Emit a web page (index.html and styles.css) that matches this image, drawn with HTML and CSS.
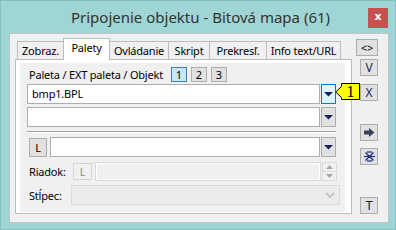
FILE: index.html
```html
<!DOCTYPE html>
<html>
<head>
<meta charset="utf-8">
<link rel="stylesheet" href="styles.css">
</head>
<body>
<div class="window">
  <div class="titlebar">
    <div class="title-spacer"></div>
    <div class="title">Pripojenie objektu - Bitová mapa (61)</div>
    <div class="close">x</div>
  </div>
  <div class="client">
    <div class="tabctl">
      <div class="tabs">
        <div class="tab w-zob">Zobraz.</div>
        <div class="tab active w-pal">Palety</div>
        <div class="tab w-ovl">Ovládanie</div>
        <div class="tab w-skr">Skript</div>
        <div class="tab w-pre">Prekresľ.</div>
        <div class="tab w-inf">Info text/URL</div>
      </div>
      <div class="sheet">
        <div class="panel">
          <div class="row-head">
            <span class="head-label">Paleta / EXT paleta / Objekt</span>
            <span class="numbtn selected">1</span>
            <span class="numbtn">2</span>
            <span class="numbtn">3</span>
          </div>
          <div class="combo row-c1">
            <div class="edit edit-full">bmp1.BPL</div>
            <div class="ddbtn focused"><svg width="9" height="6" viewBox="0 0 9 6"><polygon points="0,1 9,1 4.5,5.5" fill="#1b1f5a"/></svg></div>
          </div>
          <div class="combo row-c2">
            <div class="edit edit-full"></div>
            <div class="ddbtn"><svg width="9" height="6" viewBox="0 0 9 6"><polygon points="0,1 9,1 4.5,5.5" fill="#1b1f5a"/></svg></div>
          </div>
          <div class="sep"></div>
          <div class="combo row-l">
            <div class="lbtn">L</div>
            <div class="edit edit-l"></div>
            <div class="ddbtn"><svg width="9" height="6" viewBox="0 0 9 6"><polygon points="0,1 9,1 4.5,5.5" fill="#1b1f5a"/></svg></div>
          </div>
          <div class="combo row-riadok">
            <span class="lbl lbl-riadok">Riadok:</span>
            <div class="lbtn disabled">L</div>
            <div class="edit edit-r disabled"></div>
            <div class="spin">
              <div class="spinbtn"><svg width="7" height="4" viewBox="0 0 7 4"><polygon points="3.5,0 7,4 0,4" fill="#a8a8a8"/></svg></div>
              <div class="spinbtn"><svg width="7" height="4" viewBox="0 0 7 4"><polygon points="0,0 7,0 3.5,4" fill="#a8a8a8"/></svg></div>
            </div>
          </div>
          <div class="combo row-stlpec">
            <span class="lbl lbl-stlpec">Stĺpec:</span>
            <div class="dcombo">
              <svg width="10" height="7" viewBox="0 0 10 7"><polyline points="1,1 5,5 9,1" fill="none" stroke="#c4c4c4" stroke-width="2"/></svg>
            </div>
          </div>
        </div>
      </div>
    </div>
    <div class="side">
      <div class="sbtn wide sb-lr">&lt;&gt;</div>
      <div class="sbtn sb-v">V</div>
      <div class="sbtn sb-x">X</div>
      <div class="sbtn sb-arrow"><svg width="11" height="9" viewBox="0 0 11 9"><polygon points="0,2.5 5,2.5 5,0 10.5,4.5 5,9 5,6.5 0,6.5" fill="#3c3f5c"/></svg></div>
      <div class="sbtn sb-star"><svg width="11" height="11" viewBox="0 0 11 11"><g stroke="#1b2a7a" stroke-width="1.2" fill="none"><line x1="0" y1="5.5" x2="11" y2="5.5"/><line x1="1.5" y1="1.5" x2="9.5" y2="9.5"/><line x1="9.5" y1="1.5" x2="1.5" y2="9.5"/><line x1="3" y1="1" x2="8" y2="1"/><line x1="3" y1="10" x2="8" y2="10"/></g></svg></div>
      <div class="sbtn sb-t">T</div>
    </div>
    <div class="callout">
      <svg class="callout-shape" width="25" height="18" viewBox="0 0 25 18"><path d="M0.7,9 L6.5,3.5 L6.5,0.5 L24.5,0.5 L24.5,16.5 L6.5,16.5 L6.5,14.5 Z" fill="#ffff00" stroke="#000" stroke-width="1"/></svg>
      <span class="callout-text">1</span>
    </div>
  </div>
</div>
</body>
</html>
```
FILE: styles.css
```css
* { box-sizing: border-box; }
body { margin: 0; background: #fff; }
.window {
  width: 396px; height: 230px;
  background: #9fd5d5;
  border: 1px solid #86c0c0;
  padding: 0 6px 6px 8px;
  display: flex; flex-direction: column;
  font-family: "Noto Sans", "Open Sans", sans-serif;
  font-size: 11px; letter-spacing: -0.2px; color: #000;
}
.titlebar {
  height: 32px; flex: none;
  display: flex; align-items: flex-start;
}
.title-spacer { width: 20px; flex: none; }
.title {
  flex: 1; text-align: center;
  font-size: 15px; letter-spacing: 0; color: #333;
  line-height: 20px; margin-top: 6px;
  padding-left: 4px; white-space: nowrap;
}
.close {
  width: 20px; height: 20px; margin-top: 7px; margin-right: 1px;
  background: #c75050; color: #fff;
  font-weight: bold; font-size: 11px; line-height: 17px; letter-spacing: 0;
  text-align: center; font-family: "DejaVu Sans", sans-serif;
}
.client {
  position: relative;
  flex: 1;
  background: #f0f0f0;
  border: 1px solid #c4c4c4;
  display: flex; align-items: flex-start;
  padding: 4px 0 0 5px;
}
.tabctl { width: 337px; flex: none; display: flex; flex-direction: column; }
.tabs { height: 21px; display: flex; align-items: flex-end; padding-left: 2px; position: relative; z-index: 2; }
.tab {
  height: 18px; border: 1px solid #bcbcbc; border-bottom: none;
  background: #f0f0f0; margin-left: -1px;
  text-align: center; line-height: 17px; white-space: nowrap;
}
.tab:first-child { margin-left: 0; }
.tab.active {
  height: 22px; margin-bottom: -1px; background: #fff;
  position: relative; z-index: 3; line-height: 18px;
}
.w-zob { width: 47px; }
.w-pal { width: 47px; }
.w-ovl { width: 60px; }
.w-skr { width: 42px; }
.w-pre { width: 58px; }
.w-inf { width: 75px; }
.sheet {
  height: 155px; background: #fff;
  border: 1px solid #bcbcbc;
  padding: 3px 6px 1px 4px;
}
.panel {
  height: 149px; background: #f0f0f0;
  padding: 4px 0 0 7px;
  display: flex; flex-direction: column;
}
.row-head { height: 15px; display: flex; align-items: center; }
.head-label { width: 144px; padding-left: 2px; line-height: 15px; white-space: nowrap; }
.numbtn {
  width: 16px; height: 15px; margin-right: 4px;
  border: 1px solid #adadad; background: #e1e1e1;
  text-align: center; line-height: 13px; letter-spacing: 0;
}
.numbtn.selected { background: #cce4f7; border-color: #3c7fb1; }
.combo { display: flex; align-items: center; }
.row-c1 { margin-top: 2px; height: 20px; }
.row-c2 { margin-top: 3px; height: 20px; }
.row-l { margin-top: 4px; height: 20px; }
.row-riadok { margin-top: 5px; height: 19px; }
.row-stlpec { margin-top: 4px; height: 20px; }
.edit {
  height: 20px; background: #fff; border: 1px solid #abadb3;
  padding-left: 4px; line-height: 18px;
}
.edit-full { width: 293px; }
.edit-l { width: 270px; margin-left: 3px; }
.edit-r { width: 226px; margin-left: 3px; height: 19px; }
.edit.disabled { background: #f0f0f0; border-color: #d9d9d9; box-shadow: inset 0 0 0 1px #fff; }
.ddbtn {
  width: 15px; height: 20px; margin-left: 1px;
  border: 1px solid #adadad; background: #e1e1e1;
  display: flex; align-items: center; justify-content: center;
}
.ddbtn.focused { border-color: #0078d7; background: #e5f1fb; }
.sep { margin-top: 4px; width: 309px; height: 2px; border-top: 1px solid #a0a0a0; border-bottom: 1px solid #fff; }
.lbtn {
  width: 18px; height: 19px; margin-left: 2px;
  border: 1px solid #adadad; background: #e1e1e1;
  text-align: center; line-height: 17px;
}
.lbtn.disabled {
  width: 19px; height: 17px; margin-left: 0;
  border-color: #d5d5d5; background: #f0f0f0; color: #8a8a8a; line-height: 15px;
}
.lbl { padding-left: 2px; white-space: nowrap; }
.lbl-riadok { width: 46px; }
.lbl-stlpec { width: 44px; }
.spin { margin-left: 1px; display: flex; flex-direction: column; }
.spinbtn {
  width: 15px; height: 10px; border: 1px solid #dcdcdc; background: #f0f0f0;
  display: flex; align-items: center; justify-content: center;
}
.spinbtn + .spinbtn { height: 9px; border-top: none; }
.dcombo {
  width: 269px; height: 20px; border: 1px solid #dadada; background: #ececec;
  display: flex; align-items: center; justify-content: flex-end; padding-right: 4px;
}
.side {
  width: 22px; margin-left: 4px; flex: none;
  display: flex; flex-direction: column; align-items: flex-end;
  margin-top: 1px;
}
.sbtn {
  width: 18px; height: 17px;
  border: 1px solid #adadad; background: #e1e1e1;
  display: flex; align-items: center; justify-content: center;
  font-size: 12px; line-height: 15px; letter-spacing: 0; color: #1a1f5e;
}
.sbtn.wide { width: 22px; color: #000; font-size: 11px; }
.sb-v { margin-top: 3px; }
.sb-x { margin-top: 8px; }
.sb-arrow { margin-top: 23px; }
.sb-star { margin-top: 7px; }
.sb-t { margin-top: 32px; font-size: 13px; }
.callout {
  position: absolute; left: 325px; top: 49px;
  width: 25px; height: 18px;
}
.callout-shape { position: absolute; left: 0; top: 0; }
.callout-text {
  position: absolute; left: 6px; top: 0; width: 19px; height: 17px;
  text-align: center; font-family: "Liberation Serif", serif; font-size: 16px; line-height: 17px; letter-spacing: 0;
}
```
